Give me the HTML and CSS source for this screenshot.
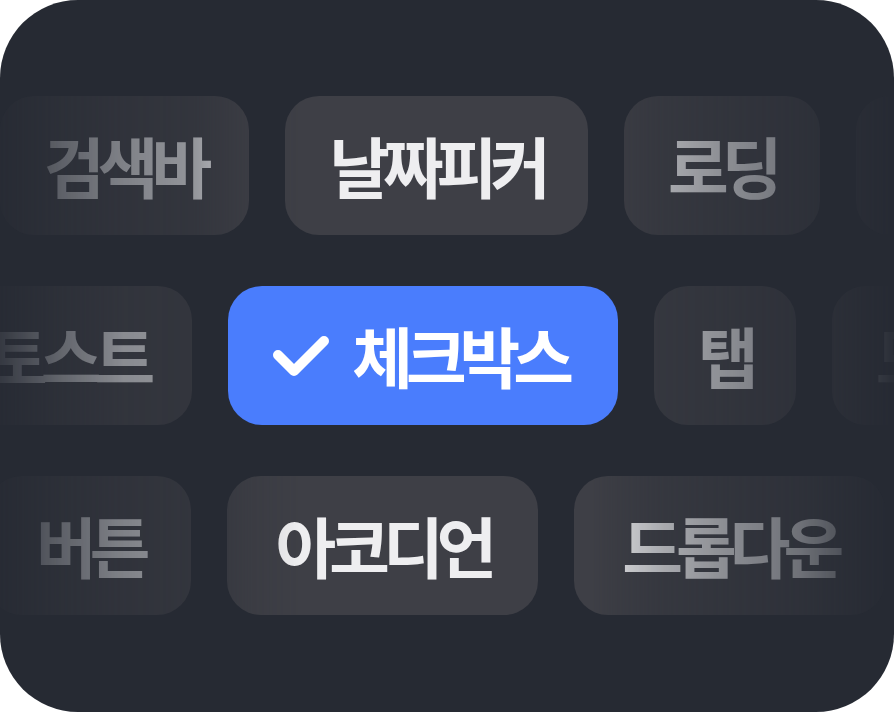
FILE: index.html
```html
<!DOCTYPE html>
<html lang="ko">
<head>
<meta charset="utf-8">
<link rel="stylesheet" href="styles.css">
</head>
<body>
<div class="card">
  <div class="rows">
    <div class="row row-1">
      <div class="track">
        <div class="chip">검색바</div>
        <div class="chip">날짜피커</div>
        <div class="chip">로딩</div>
        <div class="chip">입력창</div>
      </div>
    </div>
    <div class="row row-2">
      <div class="track">
        <div class="chip">토스트</div>
        <div class="chip chip-active">
          <svg class="check" viewBox="0 0 60 46" width="60" height="46" aria-hidden="true">
            <path d="M8 22 L24 38 L54 8" fill="none" stroke="#ffffff" stroke-width="10" stroke-linecap="round" stroke-linejoin="round"/>
          </svg>
          <span>체크박스</span>
        </div>
        <div class="chip">탭</div>
        <div class="chip">모달</div>
      </div>
    </div>
    <div class="row row-3">
      <div class="track">
        <div class="chip">버튼</div>
        <div class="chip">아코디언</div>
        <div class="chip">드롭다운</div>
      </div>
    </div>
  </div>
</div>
</body>
</html>
```

FILE: styles.css
```css
* { box-sizing: border-box; }

html, body {
  margin: 0;
  padding: 0;
  background: #ffffff;
}

.card {
  width: 894px;
  height: 712px;
  border-radius: 78px;
  background: #262a33;
  overflow: hidden;
}

.rows {
  display: flex;
  flex-direction: column;
  gap: 51px;
  padding-top: 96px;
}

.row {
  width: 894px;
  height: 139px;
  -webkit-mask-image: linear-gradient(to right,
    rgba(0,0,0,0.08) 0px,
    rgba(0,0,0,0.28) 60px,
    rgba(0,0,0,0.45) 125px,
    rgba(0,0,0,0.55) 195px,
    rgba(0,0,0,0.88) 250px,
    rgba(0,0,0,1) 300px,
    rgba(0,0,0,1) 592px,
    rgba(0,0,0,0.85) 617px,
    rgba(0,0,0,0.66) 662px,
    rgba(0,0,0,0.52) 720px,
    rgba(0,0,0,0.36) 800px,
    rgba(0,0,0,0.12) 865px,
    rgba(0,0,0,0.02) 894px);
  mask-image: linear-gradient(to right,
    rgba(0,0,0,0.08) 0px,
    rgba(0,0,0,0.28) 60px,
    rgba(0,0,0,0.45) 125px,
    rgba(0,0,0,0.55) 195px,
    rgba(0,0,0,0.88) 250px,
    rgba(0,0,0,1) 300px,
    rgba(0,0,0,1) 592px,
    rgba(0,0,0,0.85) 617px,
    rgba(0,0,0,0.66) 662px,
    rgba(0,0,0,0.52) 720px,
    rgba(0,0,0,0.36) 800px,
    rgba(0,0,0,0.12) 865px,
    rgba(0,0,0,0.02) 894px);
}

.row-2 {
  -webkit-mask-image: linear-gradient(to right,
    rgba(0,0,0,0.08) 0px,
    rgba(0,0,0,0.3) 60px,
    rgba(0,0,0,0.5) 125px,
    rgba(0,0,0,0.55) 194px,
    rgba(0,0,0,1) 226px,
    rgba(0,0,0,1) 624px,
    rgba(0,0,0,0.62) 660px,
    rgba(0,0,0,0.52) 720px,
    rgba(0,0,0,0.36) 800px,
    rgba(0,0,0,0.12) 865px,
    rgba(0,0,0,0.02) 894px);
  mask-image: linear-gradient(to right,
    rgba(0,0,0,0.08) 0px,
    rgba(0,0,0,0.3) 60px,
    rgba(0,0,0,0.5) 125px,
    rgba(0,0,0,0.55) 194px,
    rgba(0,0,0,1) 226px,
    rgba(0,0,0,1) 624px,
    rgba(0,0,0,0.62) 660px,
    rgba(0,0,0,0.52) 720px,
    rgba(0,0,0,0.36) 800px,
    rgba(0,0,0,0.12) 865px,
    rgba(0,0,0,0.02) 894px);
}

.track {
  display: flex;
  gap: 36px;
  height: 139px;
  white-space: nowrap;
}

.row-1 .track { margin-left: 0; }
.row-2 .track { margin-left: -57px; }
.row-3 .track { margin-left: -12px; }

.chip {
  flex: none;
  display: flex;
  align-items: center;
  justify-content: center;
  height: 139px;
  padding: 0 44px 4px;
  border-radius: 34px;
  background: #3e3f46;
  color: #eeeef0;
  font-family: "Noto Sans CJK KR", "Noto Sans", sans-serif;
  font-weight: 700;
  font-size: 66px;
  letter-spacing: -7px;
  line-height: 1;
}

.row-3 .chip {
  padding-left: 48px;
  padding-right: 48px;
}

.chip-active {
  background: #4a7dfd;
  color: #ffffff;
  gap: 22px;
  padding-left: 42px;
  padding-right: 51px;
}

.check {
  display: block;
  flex: none;
  margin-top: 4px;
}
```
